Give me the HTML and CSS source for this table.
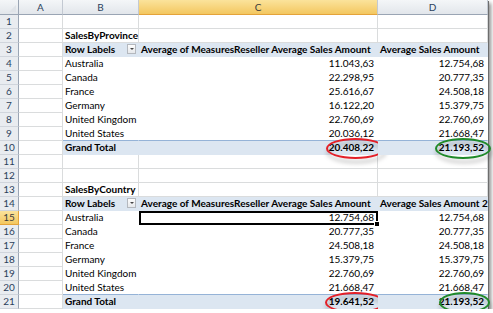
FILE: index.html
```html
<!DOCTYPE html>
<html lang="en">
<head>
  <meta charset="UTF-8">
  <title>SalesByProvince / SalesByCountry</title>
  <link rel="stylesheet" href="styles.css">
</head>
<body>
  <div class="sheet">
    <!-- column headers -->
    <div class="hd corner"></div>
    <div class="hd col">A</div>
    <div class="hd col">B</div>
    <div class="hd col sel">C</div>
    <div class="hd col">D</div>

    <div class="hd row">1</div><div class="c"></div><div class="c"></div><div class="c"></div><div class="c"></div>
    <div class="hd row">2</div><div class="c"></div><div class="c b">SalesByProvince</div><div class="c"></div><div class="c"></div>
    <div class="hd row">3</div><div class="c"></div>
    <div class="c b ph">Row Labels<span class="drop"></span></div>
    <div class="c b ph">Average of MeasuresReseller Average Sales Amount</div>
    <div class="c b ph">Average Sales Amount</div>
    <div class="hd row">4</div><div class="c"></div><div class="c p">Australia</div><div class="c p n">11.043,63</div><div class="c p n">12.754,68</div>
    <div class="hd row">5</div><div class="c"></div><div class="c p">Canada</div><div class="c p n">22.298,95</div><div class="c p n">20.777,35</div>
    <div class="hd row">6</div><div class="c"></div><div class="c p">France</div><div class="c p n">25.616,67</div><div class="c p n">24.508,18</div>
    <div class="hd row">7</div><div class="c"></div><div class="c p">Germany</div><div class="c p n">16.122,20</div><div class="c p n">15.379,75</div>
    <div class="hd row">8</div><div class="c"></div><div class="c p">United Kingdom</div><div class="c p n">22.760,69</div><div class="c p n">22.760,69</div>
    <div class="hd row">9</div><div class="c"></div><div class="c p">United States</div><div class="c p n">20.036,12</div><div class="c p n">21.668,47</div>
    <div class="hd row">10</div><div class="c"></div>
    <div class="c b gt">Grand Total</div>
    <div class="c b gt n ring red">20.408,22</div>
    <div class="c b gt n ring green">21.193,52</div>
    <div class="hd row">11</div><div class="c"></div><div class="c"></div><div class="c"></div><div class="c"></div>
    <div class="hd row">12</div><div class="c"></div><div class="c"></div><div class="c"></div><div class="c"></div>
    <div class="hd row">13</div><div class="c"></div><div class="c b">SalesByCountry</div><div class="c"></div><div class="c"></div>
    <div class="hd row">14</div><div class="c"></div>
    <div class="c b ph">Row Labels<span class="drop"></span></div>
    <div class="c b ph">Average of MeasuresReseller Average Sales Amount</div>
    <div class="c b ph">Average Sales Amount 2</div>
    <div class="hd row sel">15</div><div class="c"></div><div class="c p">Australia</div><div class="c p n active">12.754,68</div><div class="c p n">12.754,68</div>
    <div class="hd row">16</div><div class="c"></div><div class="c p">Canada</div><div class="c p n">20.777,35</div><div class="c p n">20.777,35</div>
    <div class="hd row">17</div><div class="c"></div><div class="c p">France</div><div class="c p n">24.508,18</div><div class="c p n">24.508,18</div>
    <div class="hd row">18</div><div class="c"></div><div class="c p">Germany</div><div class="c p n">15.379,75</div><div class="c p n">15.379,75</div>
    <div class="hd row">19</div><div class="c"></div><div class="c p">United Kingdom</div><div class="c p n">22.760,69</div><div class="c p n">22.760,69</div>
    <div class="hd row">20</div><div class="c"></div><div class="c p">United States</div><div class="c p n">21.668,47</div><div class="c p n">21.668,47</div>
    <div class="hd row">21</div><div class="c"></div>
    <div class="c b gt">Grand Total</div>
    <div class="c b gt n ring red low">19.641,52</div>
    <div class="c b gt n ring green low">21.193,52</div>
  </div>
</body>
</html>
```

FILE: styles.css
```css
body {
  margin: 0;
  background: #fff;
  font-family: 'Lato', 'Liberation Sans', sans-serif;
  font-size: 10px;
  color: #000;
}
.sheet {
  display: grid;
  grid-template-columns: 19px 44px 76px 239px 110px;
  grid-template-rows: 15px repeat(21, 14px);
  width: 488px;
  box-shadow: 1px 1px 0 #6d6d6d, 3px 3px 4px rgba(0, 0, 0, 0.45);
  background: #fff;
}
.hd {
  box-sizing: border-box;
  background: linear-gradient(#f4f6f8, #e2e6eb);
  color: #2b3f5c;
  border-right: 1px solid #c3c9d2;
  border-bottom: 1px solid #c3c9d2;
  display: flex;
  align-items: center;
  justify-content: center;
  line-height: 13px;
}
.hd.corner {
  position: relative;
  border-right-color: #9aa5b4;
  border-bottom-color: #9aa5b4;
}
.hd.corner::after {
  content: "";
  position: absolute;
  right: 2px;
  bottom: 2px;
  border-left: 7px solid transparent;
  border-bottom: 7px solid #dfe3e8;
}
.hd.col {
  border-bottom-color: #9aa5b4;
}
.hd.row {
  background: #e9ecf0;
  border-right-color: #9aa5b4;
  border-bottom-color: #d0d5dc;
}
.hd.sel {
  background: linear-gradient(#fbe39b, #f3c760);
  border-bottom-color: #e4a33a;
  color: #3b3b3b;
}
.hd.row.sel {
  border-right-color: #e4a33a;
}
.c {
  box-sizing: border-box;
  border-right: 1px solid #dadcdd;
  border-bottom: 1px solid #dadcdd;
  padding: 0 2px;
  line-height: 13px;
  white-space: nowrap;
  overflow: visible;
}
/* pivot body cells are filled white, so no gridlines show */
.c.p {
  border-color: #fff;
}
.b {
  font-weight: bold;
}
.n {
  text-align: right;
  padding-right: 3px;
}
.ph {
  position: relative;
  background: #dce6f1;
  border-right-color: #dce6f1;
  border-bottom-color: #dce6f1;
}
.drop {
  position: absolute;
  right: 2px;
  top: 1px;
  width: 9px;
  height: 10px;
  box-sizing: border-box;
  border: 1px solid #b4b8be;
  background: linear-gradient(#fdfdfd, #e6e8eb);
}
.drop::after {
  content: "";
  position: absolute;
  left: 2px;
  top: 3px;
  border-left: 2px solid transparent;
  border-right: 2px solid transparent;
  border-top: 2px solid #444;
}
.gt {
  background: #dce6f1;
  border-top: 1px solid #95b3d7;
  border-right-color: #dce6f1;
  border-bottom-color: #dce6f1;
  margin-top: -1px;
}
.active {
  position: relative;
  outline: 2px solid #000;
  outline-offset: -2px;
}
.active::after {
  content: "";
  position: absolute;
  right: -3px;
  bottom: -3px;
  width: 4px;
  height: 4px;
  background: #000;
  border: 1px solid #fff;
}
.ring {
  position: relative;
}
.ring::after {
  content: "";
  position: absolute;
  top: -3px;
  height: 17px;
  border-radius: 50%;
  border: 2px solid;
  filter: drop-shadow(1px 4px 2px rgba(0, 0, 0, 0.3));
}
.ring.red::after {
  left: 187px;
  width: 55px;
  border-color: #e32028;
}
.ring.green::after {
  left: 57px;
  width: 52px;
  border-color: #208a2a;
}
.ring.red.low::after {
  left: 186px;
  width: 56px;
}
.ring.green.low::after {
  left: 61px;
  width: 47px;
}
```
